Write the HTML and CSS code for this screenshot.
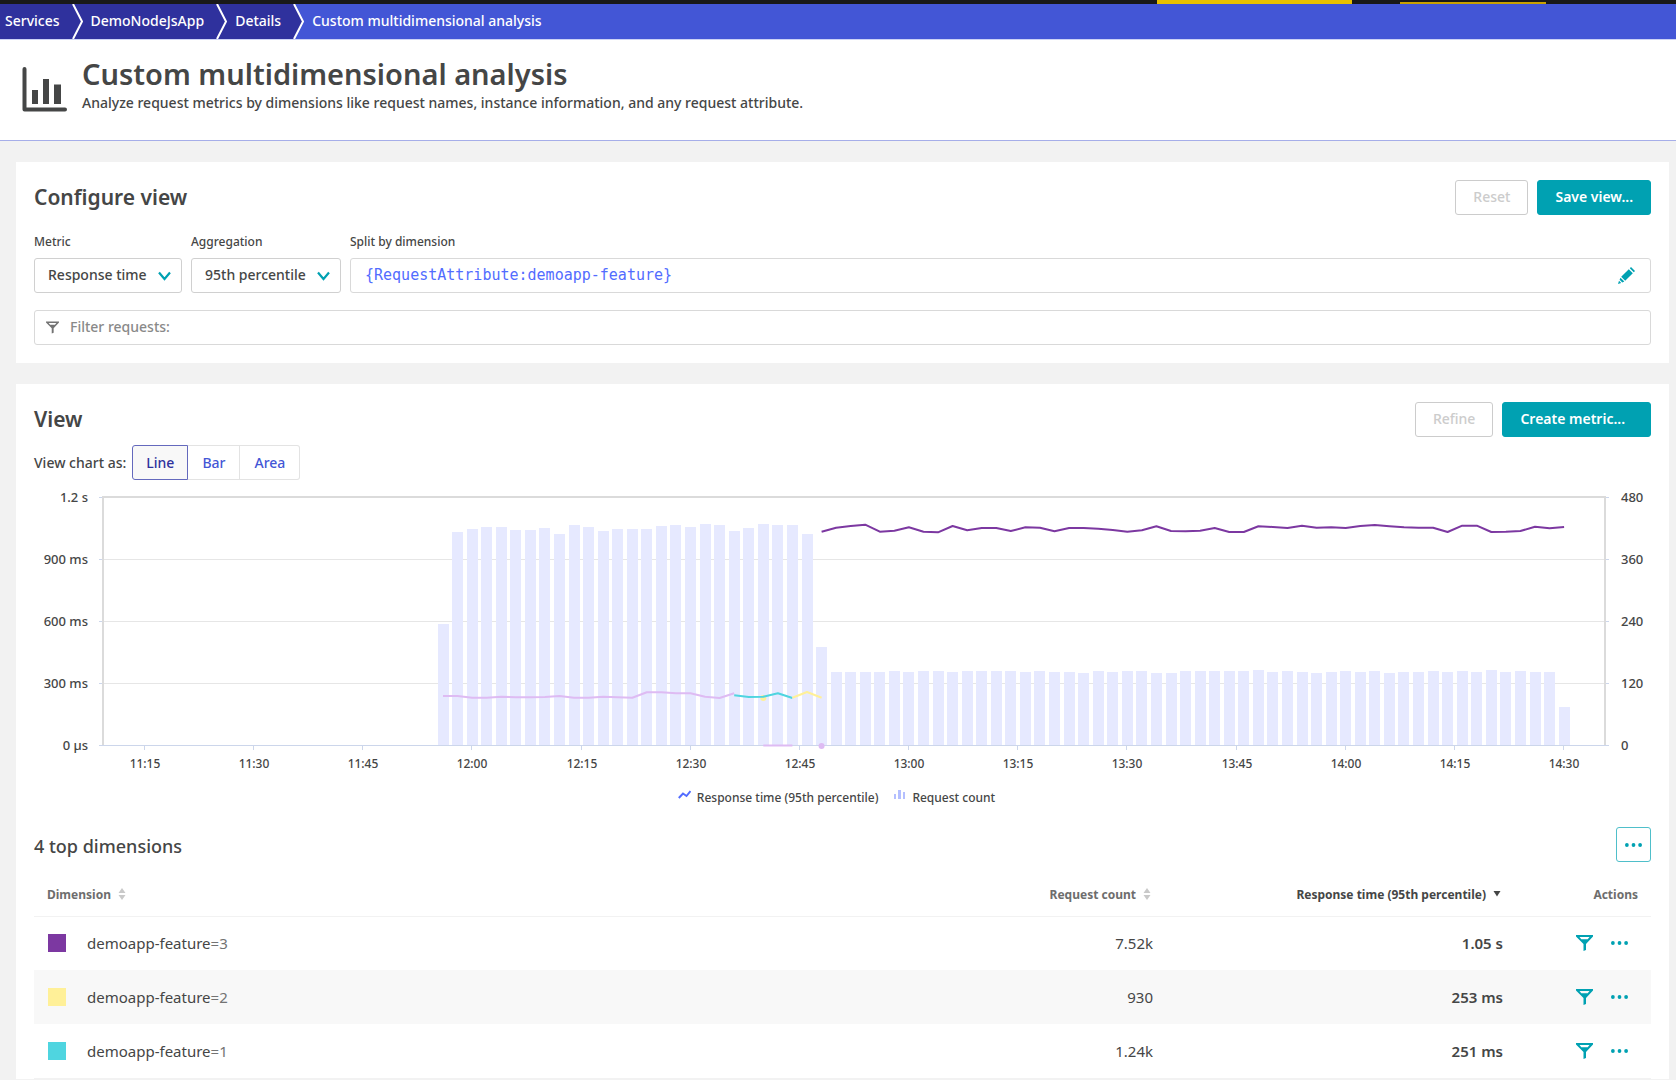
FILE: index.html
```html
<!DOCTYPE html>
<html lang="en">
<head>
<meta charset="utf-8">
<meta name="viewport" content="width=device-width, initial-scale=1">
<title>Custom multidimensional analysis</title>
<link rel="stylesheet" href="styles.css">
</head>
<body>
<svg class="symbols" aria-hidden="true">
  <symbol id="funnel" viewBox="0 0 17 16"><path fill-rule="evenodd" d="M0 0h17v1.5L10 9v6L7.500 16V9L0 1.500zM3.500 2l1.800 2.300h6.400l1.800-2.300z"/></symbol>
  <symbol id="dots" viewBox="0 0 18 4"><circle cx="2" cy="2" r="2"/><circle cx="9" cy="2" r="2"/><circle cx="16" cy="2" r="2"/></symbol>
  <symbol id="chevron" viewBox="0 0 13 10"><path d="M1 1.500l5.500 6.500L12 1.500" fill="none" stroke="currentColor" stroke-width="2.200"/></symbol>
  <symbol id="sort" viewBox="0 0 8 12"><path d="M4 0l3.500 5h-7zM4 12l3.500-5h-7z"/></symbol>
  <symbol id="sorted" viewBox="0 0 8 12"><path d="M.5 3h7L4 8.500z"/></symbol>
  <symbol id="step" viewBox="0 0 12 35"><path class="step-fill" d="M0 0h1l9 17.500L1 35H0z"/><path class="step-line" d="M1 0l9 17.500L1 35"/></symbol>
</svg>

<div class="topbar"><span class="topbar-tab"></span><span class="topbar-tab topbar-tab-low"></span></div>

<nav aria-label="Breadcrumb">
  <ol class="crumbs">
    <li class="crumb"><a href="#services">Services</a><svg class="step" aria-hidden="true"><use href="#step"/></svg></li>
    <li class="crumb"><a href="#app">DemoNodeJsApp</a><svg class="step" aria-hidden="true"><use href="#step"/></svg></li>
    <li class="crumb"><a href="#details">Details</a><svg class="step step-last" aria-hidden="true"><use href="#step"/></svg></li>
    <li class="crumb crumb-current" aria-current="page">Custom multidimensional analysis</li>
  </ol>
</nav>

<header class="page-head">
  <svg class="page-icon" viewBox="0 0 45 45" aria-hidden="true"><path d="M2.500 2v40.500H43" fill="none" stroke="currentColor" stroke-width="4" stroke-linecap="round" stroke-linejoin="round"/><path d="M10 23h6v14h-6zM21 12h6v25h-6zM32 17.500h7V37h-7z"/></svg>
  <div>
    <h1>Custom multidimensional analysis</h1>
    <p>Analyze request metrics by dimensions like request names, instance information, and any request attribute.</p>
  </div>
</header>

<main>
  <section class="card config">
    <div class="card-head">
      <h2>Configure view</h2>
      <div class="actions">
        <button class="btn" disabled>Reset</button>
        <button class="btn btn-primary">Save view...</button>
      </div>
    </div>
    <div class="fields">
      <div class="field field-metric">
        <label for="metric">Metric</label>
        <div class="control">
          <select id="metric"><option>Response time</option></select>
          <svg class="chevron" aria-hidden="true"><use href="#chevron"/></svg>
        </div>
      </div>
      <div class="field field-agg">
        <label for="aggregation">Aggregation</label>
        <div class="control">
          <select id="aggregation"><option>95th percentile</option></select>
          <svg class="chevron" aria-hidden="true"><use href="#chevron"/></svg>
        </div>
      </div>
      <div class="field field-split">
        <label for="split">Split by dimension</label>
        <div class="box">
          <input class="code" id="split" type="text" value="{RequestAttribute:demoapp-feature}">
          <button class="icon-btn" aria-label="Edit dimension"><svg class="pencil" viewBox="0 0 17 17" aria-hidden="true"><path d="M11.800 1.200l1.200-1.200 4 4-1.200 1.200zM10.800 2.200l4 4-7.600 7.600-4-4zM2.500 10.800l3.800 3.800-2 .9-2.700-2.700zM1 13.800l2.200 2.200L0 17z"/></svg></button>
        </div>
      </div>
    </div>
    <div class="box filter">
      <svg class="filter-icon" aria-hidden="true"><use href="#funnel"/></svg>
      <input type="text" aria-label="Filter requests" placeholder="Filter requests:">
    </div>
  </section>

  <section class="card view">
    <div class="card-head">
      <h2>View</h2>
      <div class="actions">
        <button class="btn" disabled>Refine</button>
        <button class="btn btn-primary btn-create">Create metric...</button>
      </div>
    </div>
    <div class="switch">
      <span id="switch-label">View chart as:</span>
      <div class="segments" role="group" aria-labelledby="switch-label">
        <button class="segment segment-on" aria-pressed="true">Line</button>
        <button class="segment" aria-pressed="false">Bar</button>
        <button class="segment" aria-pressed="false">Area</button>
      </div>
    </div>

    <svg class="chart" id="chart" viewBox="0 0 1617 292" role="img" aria-label="Response time and request count over time"></svg>

    <ul class="legend">
      <li><svg class="legend-icon" viewBox="0 0 13 12" aria-hidden="true"><path d="M.8 9L5 4.500 8.500 7 12.500 2" fill="none" stroke="#526cff" stroke-width="2"/></svg>Response time (95th percentile)</li>
      <li><svg class="legend-icon" viewBox="0 0 13 12" aria-hidden="true"><path d="M1 5h2v5H1zM5 1h3v9H5zM10 3h2v7h-2z" fill="#b4bfff"/></svg>Request count</li>
    </ul>

    <div class="table-head">
      <h3>4 top dimensions</h3>
      <button class="more" aria-label="More options"><svg class="dots" aria-hidden="true"><use href="#dots"/></svg></button>
    </div>

    <table>
      <thead>
        <tr>
          <th scope="col">Dimension<svg class="sort" aria-hidden="true"><use href="#sort"/></svg></th>
          <th scope="col" class="num">Request count<svg class="sort" aria-hidden="true"><use href="#sort"/></svg></th>
          <th scope="col" class="num sorted" aria-sort="descending">Response time (95th percentile)<svg class="sort" aria-hidden="true"><use href="#sorted"/></svg></th>
          <th scope="col" class="tools">Actions</th>
        </tr>
      </thead>
      <tbody>
        <tr>
          <td><div class="dim"><span class="swatch swatch-purple"></span><span>demoapp-feature<span class="dim-value">=3</span></span></div></td>
          <td class="num">7.52k</td>
          <td class="num strong">1.05 s</td>
          <td><div class="row-tools"><button class="icon-btn" aria-label="Filter"><svg class="funnel" aria-hidden="true"><use href="#funnel"/></svg></button><button class="icon-btn" aria-label="More"><svg class="dots" aria-hidden="true"><use href="#dots"/></svg></button></div></td>
        </tr>
        <tr>
          <td><div class="dim"><span class="swatch swatch-yellow"></span><span>demoapp-feature<span class="dim-value">=2</span></span></div></td>
          <td class="num">930</td>
          <td class="num strong">253 ms</td>
          <td><div class="row-tools"><button class="icon-btn" aria-label="Filter"><svg class="funnel" aria-hidden="true"><use href="#funnel"/></svg></button><button class="icon-btn" aria-label="More"><svg class="dots" aria-hidden="true"><use href="#dots"/></svg></button></div></td>
        </tr>
        <tr>
          <td><div class="dim"><span class="swatch swatch-cyan"></span><span>demoapp-feature<span class="dim-value">=1</span></span></div></td>
          <td class="num">1.24k</td>
          <td class="num strong">251 ms</td>
          <td><div class="row-tools"><button class="icon-btn" aria-label="Filter"><svg class="funnel" aria-hidden="true"><use href="#funnel"/></svg></button><button class="icon-btn" aria-label="More"><svg class="dots" aria-hidden="true"><use href="#dots"/></svg></button></div></td>
        </tr>
      </tbody>
    </table>
  </section>
</main>
<script src="chart.js"></script>
</body>
</html>
```
FILE: styles.css
```css
* { box-sizing: border-box; }

body {
  margin: 0;
  background: #f2f2f2;
  color: #454646;
  font: 500 14px/20px "Noto Sans", "Open Sans", sans-serif;
}

h1, h2, h3, p, ul, ol { margin: 0; padding: 0; }
ul, ol { list-style: none; }
button, input, select { font: inherit; color: inherit; margin: 0; }
button { cursor: pointer; }
svg { display: block; fill: currentColor; flex: none; }
.symbols { position: absolute; width: 0; height: 0; }

/* top bar */
.topbar {
  display: flex;
  align-items: flex-end;
  justify-content: flex-end;
  gap: 48px;
  height: 4px;
  padding-right: 130px;
  background: #191919;
}
.topbar-tab { width: 195px; height: 4px; background: #e8c000; }
.topbar-tab-low { width: 146px; height: 2px; background: #c9a100; }

/* breadcrumb */
.crumbs {
  display: flex;
  height: 36px;
  background: #4356d6;
  border-bottom: 1px solid #ccd2f5;
  color: #fff;
  line-height: 34px;
}
.crumb { display: flex; }
.crumb a {
  padding: 0 12px 0 8px;
  background: #2f319d;
  color: #fff;
  text-decoration: none;
}
.crumb:first-child a { padding-left: 5px; }
.crumb-current { padding-left: 8px; }
.step { width: 12px; height: 35px; margin-right: -1px; background: #2f319d; }
.step-last { background: none; }
.step-fill { fill: #2f319d; }
.step-line { fill: none; stroke: #fff; stroke-width: 2px; }

/* page header */
.page-head {
  display: flex;
  gap: 15px;
  height: 101px;
  padding: 15px 22px 0;
  background: #fff;
  border-bottom: 1px solid #a6aee9;
}
.page-icon { width: 45px; height: 45px; margin-top: 12px; }
h1 { font-size: 29px; line-height: 38px; font-weight: 600; }
h2 { font-size: 21px; line-height: 34px; font-weight: 600; }
h3 { font-size: 18px; line-height: 34px; font-weight: 500; }

/* cards */
main { display: grid; gap: 21px; padding: 21px 7px 0 16px; }
.card { min-width: 0; padding: 18px 18px 0; background: #fff; }
.config { padding-bottom: 18px; }
.card-head { display: flex; justify-content: space-between; height: 35px; }
.actions { display: flex; gap: 9px; }

.btn {
  height: 35px;
  padding: 0 17px 2px;
  background: #fff;
  border: 1px solid #ccc;
  border-radius: 3px;
}
.btn:disabled { color: #ccc; }
.btn-primary { background: #00a1b2; border-color: #00a1b2; color: #fff; font-weight: 600; }
.btn-create { padding-right: 25px; }

/* form */
.fields { display: flex; gap: 9px; padding-top: 17px; }
.field { display: flex; flex-direction: column; gap: 6px; }
.field label { font-size: 12px; line-height: 20px; }
.field-metric { width: 148px; }
.field-agg { width: 150px; }
.field-split { flex: 1; }
.control { position: relative; }
.control select {
  display: block;
  width: 100%;
  height: 35px;
  padding: 0 30px 2px 13px;
  appearance: none;
  background: #fff;
  border: 1px solid #d0d0d0;
  border-radius: 3px;
}
.chevron {
  position: absolute;
  top: 13px;
  right: 11px;
  width: 13px;
  height: 10px;
  color: #00a1b2;
  pointer-events: none;
}
.box {
  display: flex;
  align-items: center;
  height: 35px;
  padding: 0 15px 0 14px;
  background: #fff;
  border: 1px solid #d9d9d9;
  border-radius: 3px;
}
.box input { flex: 1; min-width: 0; padding: 0 0 2px; border: 0; outline: 0; background: none; }
.box .code { font: 15px/20px "DejaVu Sans Mono", monospace; color: #526cff; }
.filter { gap: 11px; margin-top: 17px; padding-left: 11px; }
.filter input::placeholder { color: #898989; opacity: 1; }
.filter-icon { width: 13px; height: 13px; color: #737373; }
.icon-btn { display: flex; padding: 0; border: 0; background: none; color: #00a1b2; }
.pencil { width: 17px; height: 17px; }

/* chart type switch */
.switch { display: flex; align-items: center; gap: 6px; padding-top: 8px; }
.segments { display: flex; }
.segment {
  height: 35px;
  padding: 0 14px;
  background: #fff;
  border: 1px solid #e3e3e3;
  border-left-width: 0;
  color: #4356d6;
}
.segment:last-child { border-radius: 0 3px 3px 0; }
.segment-on {
  padding: 0 13px;
  background: #f8f8f8;
  border: 1px solid #6469bd;
  border-radius: 3px 0 0 3px;
  color: #2f319d;
}

/* chart */
.chart { width: 100%; height: auto; margin-top: 4px; overflow: visible; }
.chart text { font-size: 12px; fill: #454646; }
.chart .value-label { font-size: 13px; }
.grid-line { stroke: #e6e6e6; stroke-width: 1px; }
.frame { fill: none; stroke: #dbdbdb; stroke-width: 2px; }
.axis { fill: none; stroke: #ccd6eb; stroke-width: 1px; }
.bar { fill: #e6e9ff; }
.series { fill: none; stroke-width: 2px; stroke-linejoin: round; }
.legend {
  display: flex;
  justify-content: center;
  gap: 15px;
  padding: 12px 12px 0 0;
  font-size: 12px;
  line-height: 20px;
}
.legend li { display: flex; gap: 6px; }
.legend-icon { width: 13px; height: 12px; margin-top: 1px; }

/* table */
.table-head { display: flex; justify-content: space-between; height: 35px; margin-top: 19px; }
.table-head h3 { line-height: 38px; }
.more {
  display: grid;
  place-items: center;
  width: 35px;
  height: 35px;
  padding: 0;
  background: #fff;
  border: 1px solid #4fbfca;
  border-radius: 3px;
  color: #00a1b2;
}
.dots { width: 17px; height: 4px; }
.funnel { width: 17px; height: 16px; }
table { width: 100%; table-layout: fixed; border-collapse: collapse; }
th {
  height: 54px;
  padding: 12px 13px 0;
  border-bottom: 1px solid #f2f2f2;
  color: #6d6d6d;
  font-size: 12px;
  font-weight: 700;
  text-align: left;
}
th:nth-child(2), th:nth-child(3) { width: 350px; }
th:last-child { width: 135px; }
td { height: 54px; padding: 0 13px; font-size: 15px; font-weight: 400; }
tbody tr:nth-child(even) { background: #f8f8f8; }
tbody tr:last-child { border-bottom: 1px solid #f2f2f2; }
.num, .tools { text-align: right; }
.sorted { color: #454646; }
.strong { font-weight: 600; }
.sort { display: inline-block; width: 8px; height: 12px; margin: 0 2px 0 7px; vertical-align: -1px; color: #c9c9c9; }
.sorted .sort { color: #454646; }
.dim { display: flex; align-items: center; gap: 21px; padding-left: 1px; }
.dim-value { color: #737373; }
.swatch { width: 18px; height: 18px; }
.swatch-purple { background: #7c38a1; }
.swatch-yellow { background: #fff098; }
.swatch-cyan { background: #4fd5e0; }
.row-tools { display: flex; align-items: center; justify-content: flex-end; gap: 18px; padding-right: 10px; }
```
FILE: chart.js
```js
// Draws the response time / request count chart.
const svg = document.getElementById("chart");
const plot = { left: 69, right: 1571, top: 13, bottom: 262 };

function add(name, attrs, text) {
  const el = document.createElementNS("http://www.w3.org/2000/svg", name);
  for (const key in attrs) el.setAttribute(key, attrs[key]);
  if (text) el.textContent = text;
  svg.appendChild(el);
}

// One slot is two minutes; slot 0 is 11:56.
const slotX = (slot) => 409 + slot * 14.56;

const leftLabels = ["1.2 s", "900 ms", "600 ms", "300 ms", "0 µs"];
const rightLabels = ["480", "360", "240", "120", "0"];
const rows = [13, 75, 137, 199, 261];

rows.forEach((y, i) => {
  if (i > 0 && i < 4) {
    add("path", { class: "grid-line", d: `M${plot.left} ${y + 0.5}H${plot.right}` });
  }
  add("path", { class: "axis", d: `M65 ${y + 0.5}h4M${plot.right} ${y + 0.5}h4` });
  add("text", { class: "value-label", x: 54, y: y + 5, "text-anchor": "end" }, leftLabels[i]);
  add("text", { class: "value-label", x: 1587, y: y + 5 }, rightLabels[i]);
});
add("path", { class: "frame", d: `M${plot.left} ${plot.bottom}V${plot.top}H${plot.right}V${plot.bottom}` });

// Request count, as bar heights above the axis.
const heights = [
  122, 214, 217, 219, 219, 216, 216, 218, 212, 221, 219, 215, 217, 217, 217, 220,
  221, 219, 222, 221, 215, 218, 222, 221, 221, 212, 99, 74, 74, 74, 74, 75, 74,
  75, 75, 74, 75, 75, 75, 75, 74, 75, 74, 74, 73, 75, 74, 75, 75, 73, 73, 75, 75,
  75, 75, 75, 76, 74, 75, 74, 73, 74, 75, 74, 75, 73, 74, 74, 75, 74, 75, 74, 76,
  74, 75, 74, 74, 39
];
heights.forEach((h, i) => {
  add("rect", { class: "bar", x: Math.round(slotX(i) - 5.5), y: plot.bottom - h, width: 11, height: h });
});

// Time axis with a tick each quarter of an hour.
add("path", { class: "axis", d: `M65 ${plot.bottom - 0.5}H1575` });
for (let i = 0; i < 14; i++) {
  const x = Math.round(110 + i * 109.15);
  const minutes = 11 * 60 + 15 + i * 15;
  const label = Math.floor(minutes / 60) + ":" + String(minutes % 60).padStart(2, "0");
  add("path", { class: "axis", d: `M${x + 0.5} ${plot.bottom}v4` });
  add("text", { x: x + 1, y: 284, "text-anchor": "middle" }, label);
}

function line(color, start, ys) {
  const points = ys.map((y, i) => `${slotX(start + i).toFixed(1)},${y}`).join(" ");
  add("polyline", { class: "series", stroke: color, points });
}

line("#debbf3", 0, [212, 212, 213.7, 213.7, 212.7, 213.3, 213.3, 213, 212, 213.7, 213.7,
  212.7, 213.3, 213.7, 208.3, 208.3, 209.3, 209.3, 212.7, 214, 209.3]);
add("circle", { cx: slotX(22), cy: 214, r: 3, fill: "#fff098" });
line("#4fd5e0", 20, [211.3, 213, 212.7, 209.3, 214]);
line("#fff098", 24, [213.7, 208, 213.7]);
line("#debbf3", 22, [261.5, 261.5, 261.5]);
add("circle", { cx: slotX(26), cy: 262, r: 3, fill: "#debbf3" });
line("#7c38a1", 26, [47.7, 43.7, 42, 40.7, 47.7, 46.7, 43.3, 47.7, 48.3, 42, 46.3, 44, 44,
  47, 43.3, 43.7, 47.3, 44, 44, 44.7, 46, 47.7, 46.3, 42.3, 47, 47.3, 46.7, 44, 48, 48,
  42.3, 43, 44, 41.7, 43.7, 43.3, 44, 42, 41, 42.3, 43.3, 43.7, 43.7, 48, 41.7, 41.7, 48,
  47.7, 47, 42.7, 44.3, 43]);
```
